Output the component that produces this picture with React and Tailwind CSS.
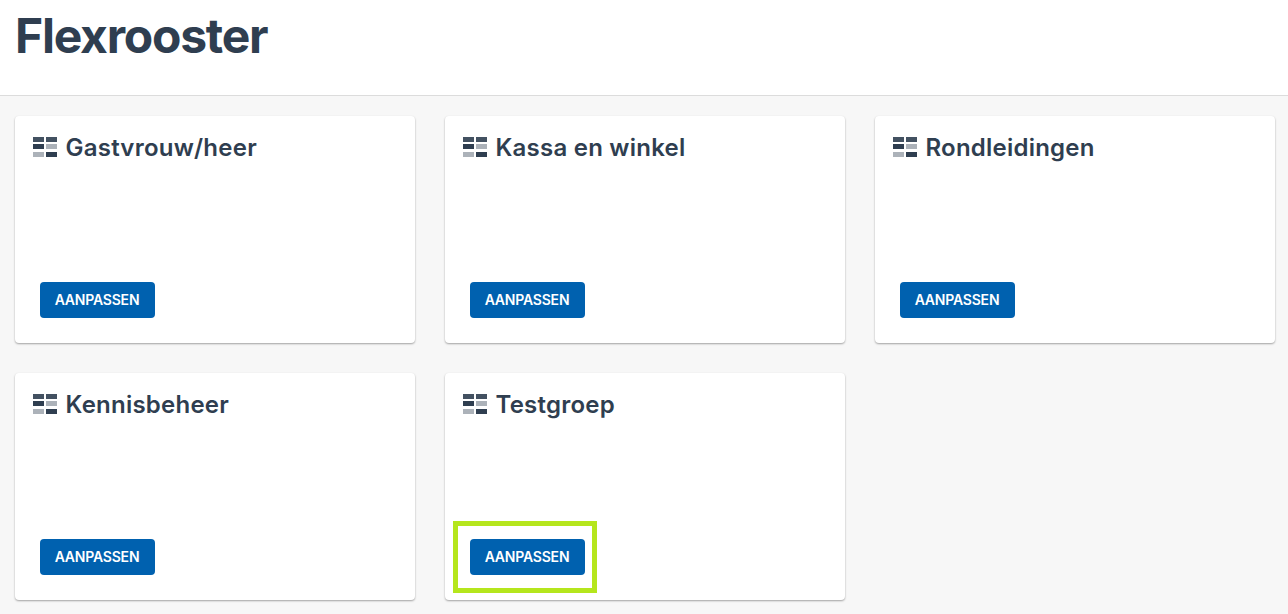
import React from "react";

const groups = ["Gastvrouw/heer", "Kassa en winkel", "Rondleidingen", "Kennisbeheer", "Testgroep"];

const TableIcon = () => (
  <svg width="25" height="20" viewBox="0 0 25 20" className="shrink-0 -mt-[2px]">
    <rect x="0" y="0" width="11" height="5" fill="#2f3e50" opacity="0.9" />
    <rect x="13" y="0" width="11" height="5" fill="#2f3e50" opacity="0.9" />
    <rect x="0" y="7" width="11" height="5" fill="#2f3e50" />
    <rect x="13" y="7" width="11" height="5" fill="#2f3e50" opacity="0.4" />
    <rect x="0" y="15" width="11" height="5" fill="#2f3e50" opacity="0.4" />
    <rect x="13" y="15" width="11" height="5" fill="#2f3e50" />
  </svg>
);

const Card = ({ name, highlight }) => (
  <div className="h-[227px] bg-white rounded shadow-[0_1px_2px_rgba(0,0,0,0.35)] pl-[18px] pt-[21px] pb-[25px] flex flex-col justify-between">
    <div className="flex items-center gap-[8px] h-[22px]">
      <TableIcon />
      <h2 className="text-[24px] font-semibold text-[#2f3e50] leading-none tracking-[0.23px] -ml-[0.5px]">{name}</h2>
    </div>
    <div className="relative w-[115px] h-[36px] ml-[7px]">
      <button
        type="button"
        className="w-full h-full bg-[#0061af] text-white text-[14px] font-semibold rounded-[4px] uppercase tracking-[-0.2px] pb-[2px] pr-[1px]"
      >
        Aanpassen
      </button>
      {highlight && (
        <div className="absolute -left-[17px] -top-[18px] w-[144px] h-[72px] border-[5px] border-[#b5e61d]" />
      )}
    </div>
  </div>
);

export default function App() {
  return (
    <div className="min-h-[614px] bg-[#f7f7f7] font-['Inter',sans-serif] overflow-hidden">
      <header className="h-[96px] bg-white border-b border-[#dcdcdc] px-[15px]">
        <h1 className="text-[48px] font-bold text-[#2f3e50] tracking-[-1.25px] leading-[72px]">Flexrooster</h1>
      </header>
      <main className="grid grid-cols-[400px_400px_400px] gap-[30px] pl-[15px] pt-[20px]">
        {groups.map((g) => (
          <Card key={g} name={g} highlight={g === "Testgroep"} />
        ))}
      </main>
    </div>
  );
}
